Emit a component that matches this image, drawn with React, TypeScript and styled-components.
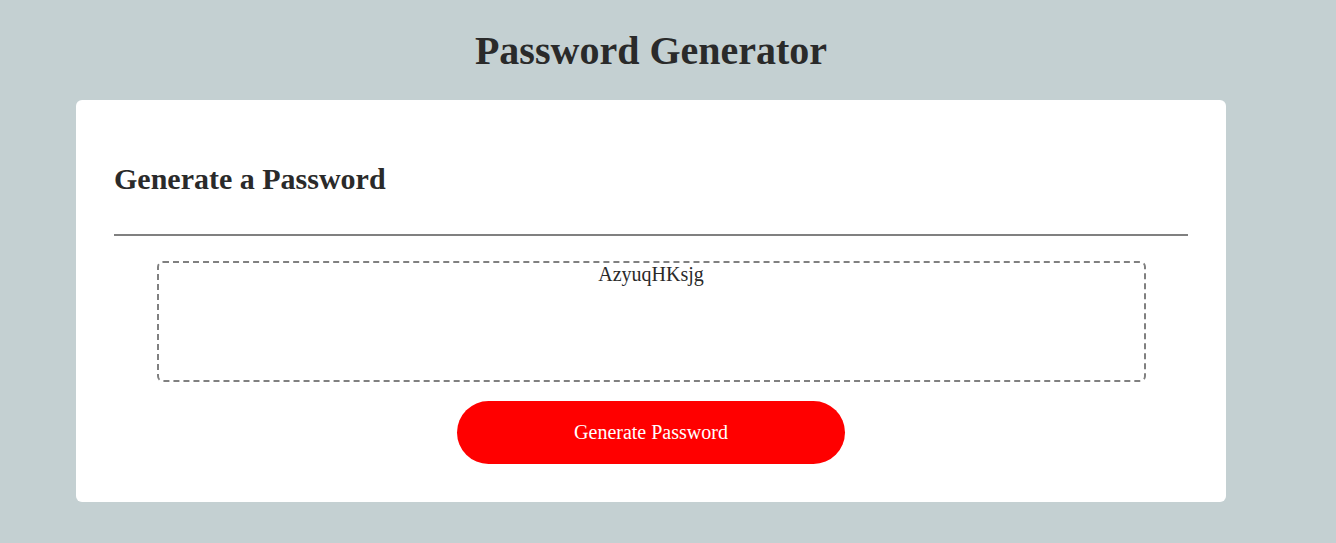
import React from "react";
import styled, { createGlobalStyle } from "styled-components";

const Global = createGlobalStyle`
  *, *::before, *::after { box-sizing: border-box; }
  html, body { margin: 0; padding: 0; }
  body {
    background: #c4d0d2;
    font-family: "Liberation Serif", "Times New Roman", serif;
    color: #2a2a2a;
  }
`;

const Page = styled.div`
  width: 1302px;
  padding: 0 76px;
`;

const Title = styled.h1`
  margin: 0;
  height: 100px;
  display: flex;
  align-items: center;
  justify-content: center;
  font-size: 40px;
  font-weight: bold;
  color: #2a2a2a;
`;

const Card = styled.main`
  background: #ffffff;
  border-radius: 6px;
  padding: 0 38px 38px;
`;

const CardHeader = styled.div`
  height: 136px;
  border-bottom: 2px solid #808080;
  display: flex;
  align-items: center;
  padding-top: 24px;
`;

const CardTitle = styled.h2`
  margin: 0;
  font-size: 30px;
  font-weight: bold;
  color: #2a2a2a;
`;

const CardBody = styled.div`
  display: flex;
  justify-content: center;
  padding-top: 25px;
`;

const Output = styled.textarea`
  width: 989px;
  height: 121px;
  border: 2px dashed #808080;
  border-radius: 6px;
  resize: none;
  text-align: center;
  font-family: "Liberation Serif", "Times New Roman", serif;
  font-size: 20px;
  color: #2a2a2a;
  padding: 0;
  outline: none;
  overflow: hidden;
`;

const CardFooter = styled.div`
  display: flex;
  justify-content: center;
  padding-top: 19px;
`;

const Button = styled.button`
  width: 388px;
  height: 63px;
  border: none;
  border-radius: 32px;
  background: #ff0000;
  color: #ffffff;
  font-family: "Liberation Serif", "Times New Roman", serif;
  font-size: 20px;
  cursor: pointer;
`;

export default function App() {
  return (
    <>
      <Global />
      <Page>
        <Title>Password Generator</Title>
        <Card>
          <CardHeader>
            <CardTitle>Generate a Password</CardTitle>
          </CardHeader>
          <CardBody>
            <Output readOnly value="AzyuqHKsjg" />
          </CardBody>
          <CardFooter>
            <Button>Generate Password</Button>
          </CardFooter>
        </Card>
      </Page>
    </>
  );
}
